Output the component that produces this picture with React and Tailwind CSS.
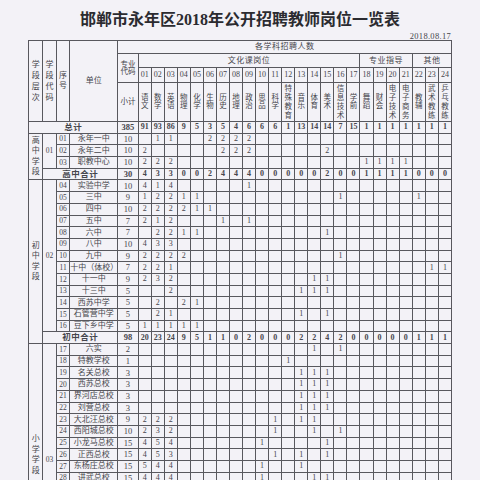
import React from 'react';

// 科目列（01–24）
const SUBJECTS = [
  '语文', '数学', '英语', '物理', '化学', '生物', '历史', '地理', '政治', '思品', '科学', '特殊教育',
  '音乐', '体育', '美术', '信息技术', '学前', '舞蹈', '财会', '电子技术', '电子商务', '教辅', '武术教练', '乒乓教练',
];

const TOTAL = [385, 91, 93, 86, 9, 5, 3, 5, 4, 6, 6, 6, 1, 13, 14, 14, 7, 15, 1, 1, 1, 1, 1, 1, 1];

const HIGH = [
  { seq: '01', name: '永年一中', total: 10, v: { 2: 1, 3: 1, 6: 2, 7: 2, 8: 2, 9: 2 } },
  { seq: '02', name: '永年二中', total: 10, v: { 1: 2, 7: 2, 8: 2, 9: 2, 15: 2 } },
  { seq: '03', name: '职教中心', total: 10, v: { 1: 2, 2: 2, 3: 2, 18: 1, 19: 1, 20: 1, 21: 1 } },
];
const HIGH_SUM = [30, 4, 3, 3, 0, 0, 2, 4, 4, 4, 0, 0, 0, 0, 0, 2, 0, 0, 1, 1, 1, 1, 0, 0, 0];

const MID = [
  { seq: '04', name: '实验中学', total: 10, v: { 1: 4, 2: 1, 3: 4, 9: 1 } },
  { seq: '05', name: '三中', total: 9, v: { 1: 1, 2: 2, 3: 2, 4: 1, 5: 1, 16: 1, 22: 1 } },
  { seq: '06', name: '四中', total: 10, v: { 1: 2, 2: 2, 3: 2, 4: 2, 5: 1, 6: 1 } },
  { seq: '07', name: '五中', total: 7, v: { 1: 2, 2: 1, 3: 2, 7: 1, 9: 1 } },
  { seq: '08', name: '六中', total: 7, v: { 2: 2, 3: 2, 4: 1, 5: 1, 15: 1 } },
  { seq: '09', name: '八中', total: 10, v: { 1: 4, 2: 3, 3: 3 } },
  { seq: '10', name: '九中', total: 9, v: { 1: 2, 2: 2, 3: 2, 4: 2, 16: 1 } },
  { seq: '11', name: '十中（体校）', total: 7, v: { 1: 2, 2: 2, 3: 1, 23: 1, 24: 1 } },
  { seq: '12', name: '十一中', total: 9, v: { 1: 2, 2: 3, 3: 2, 14: 1, 15: 1 } },
  { seq: '13', name: '十三中', total: 5, v: { 3: 2, 13: 1, 14: 1, 15: 1 } },
  { seq: '14', name: '西苏中学', total: 5, v: { 2: 2, 4: 2, 5: 1 } },
  { seq: '15', name: '石管营中学', total: 5, v: { 2: 2, 3: 1, 13: 1, 15: 1 } },
  { seq: '16', name: '豆下乡中学', total: 5, v: { 1: 1, 2: 1, 3: 1, 4: 1, 5: 1 } },
];
const MID_SUM = [98, 20, 23, 24, 9, 5, 1, 1, 0, 2, 0, 0, 0, 2, 2, 4, 2, 0, 0, 0, 0, 0, 1, 1, 1];

const PRIMARY = [
  { seq: '17', name: '六实', total: 2, v: { 14: 1, 16: 1 } },
  { seq: '18', name: '特教学校', total: 1, v: { 12: 1 } },
  { seq: '19', name: '名关总校', total: 3, v: { 13: 1, 14: 1, 15: 1 } },
  { seq: '20', name: '西苏总校', total: 3, v: { 13: 1, 14: 1, 15: 1 } },
  { seq: '21', name: '界河店总校', total: 3, v: { 13: 1, 14: 1, 15: 1 } },
  { seq: '22', name: '刘营总校', total: 3, v: { 13: 1, 14: 1, 15: 1 } },
  { seq: '23', name: '大北汪总校', total: 9, v: { 1: 2, 2: 2, 3: 2, 11: 1, 13: 1, 14: 1 } },
  { seq: '24', name: '西阳城总校', total: 10, v: { 1: 2, 2: 3, 3: 2, 11: 1, 14: 1, 16: 1 } },
  { seq: '25', name: '小龙马总校', total: 15, v: { 1: 4, 2: 5, 3: 4, 10: 1, 15: 1 } },
  { seq: '26', name: '正西总校', total: 15, v: { 1: 4, 2: 5, 3: 3, 11: 1, 13: 1, 15: 1 } },
  { seq: '27', name: '东杨庄总校', total: 15, v: { 1: 5, 2: 4, 3: 4, 10: 1, 13: 1 } },
  { seq: '28', name: '讲武总校', total: 15, v: { 1: 4, 2: 4, 3: 4, 10: 1, 14: 1, 15: 1 } },
];

const cell = 'border border-[#58585e] p-0 text-center align-middle leading-none';
const COL_IDS = Array.from({ length: 24 }, (_, i) => i + 1);

/** 竖排文字：一字一行 */
function Vert({ text, pitch = 'leading-[9px]' }) {
  return (
    <div className={`flex flex-col items-center ${pitch}`}>
      {[...text].map((c, i) => (
        <span key={i}>{c}</span>
      ))}
    </div>
  );
}

function Values({ v }) {
  return COL_IDS.map((k) => (
    <td key={k} className={`${cell} text-[8px]`}>
      {v[k] ?? ''}
    </td>
  ));
}

function SumRow({ label, span, data }) {
  return (
    <tr className="h-[11.7px] font-bold">
      <td colSpan={span} className={`${cell} text-[8.5px] tracking-[0.5px]`}>{label}</td>
      {data.map((n, i) => (
        <td key={i} className={`${cell} ${i === 0 ? 'text-[8.5px]' : 'text-[8px]'}`}>{n}</td>
      ))}
    </tr>
  );
}

function SchoolRow({ r, lead }) {
  return (
    <tr className="h-[11.7px]">
      {lead}
      <td className={`${cell} text-[7.5px]`}>{r.seq}</td>
      <td className={`${cell} text-[8px] whitespace-nowrap`}>{r.name}</td>
      <td className={`${cell} text-[8.5px]`}>{r.total}</td>
      <Values v={r.v} />
    </tr>
  );
}

export default function App() {
  return (
    <div
      className="w-[480px] h-[480px] overflow-hidden bg-[#f3f2f7] text-[#46464c]"
      style={{ fontFamily: '"Liberation Serif", "Noto Sans CJK SC", serif' }}
    >
      <div className="h-[29px] pt-[10px] text-center text-[16px] leading-[19px] font-semibold text-[#2b2b30]">
        邯郸市永年区2018年公开招聘教师岗位一览表
      </div>
      <div className="h-[11px] flex items-end justify-end pr-[29px] text-[8.5px] leading-none tracking-[0.3px]">
        2018.08.17
      </div>

      <table className="ml-[28px] w-[423px] table-fixed border-collapse">
        <colgroup>
          <col className="w-[14.3px]" />
          <col className="w-[13.6px]" />
          <col className="w-[13.4px]" />
          <col className="w-[48px]" />
          <col className="w-[20.4px]" />
          {COL_IDS.map((k) => (
            <col key={k} className="w-[13.05px]" />
          ))}
        </colgroup>
        <thead>
          <tr className="h-[13px]">
            <th rowSpan={4} className={`${cell} font-normal text-[8px]`}>
              <Vert text="学段层次" pitch="leading-[11px]" />
            </th>
            <th rowSpan={4} className={`${cell} font-normal text-[8px]`}>
              <Vert text="学段代码" pitch="leading-[11px]" />
            </th>
            <th rowSpan={4} className={`${cell} font-normal text-[8px]`}>
              <Vert text="序号" pitch="leading-[10px]" />
            </th>
            <th rowSpan={4} className={`${cell} font-normal text-[8px]`}>单位</th>
            <th colSpan={25} className={`${cell} font-normal text-[8px] tracking-[0.5px]`}>各学科招聘人数</th>
          </tr>
          <tr className="h-[14px]">
            <th rowSpan={2} className={`${cell} font-normal text-[7.5px] leading-[9px]`}>
              专业<br />代码
            </th>
            <th colSpan={17} className={`${cell} font-normal text-[8px] tracking-[0.5px]`}>文化课岗位</th>
            <th colSpan={4} className={`${cell} font-normal text-[8px] tracking-[0.5px]`}>专业指导</th>
            <th colSpan={3} className={`${cell} font-normal text-[8px] tracking-[0.5px]`}>其他</th>
          </tr>
          <tr className="h-[15px]">
            {COL_IDS.map((k) => (
              <th key={k} className={`${cell} font-normal text-[8px]`}>
                {String(k).padStart(2, '0')}
              </th>
            ))}
          </tr>
          <tr className="h-[39px]">
            <th className={`${cell} font-normal text-[7.5px]`}>小计</th>
            {SUBJECTS.map((s) => (
              <th key={s} className={`${cell} font-normal text-[7.5px]`}>
                <Vert text={s} pitch={s.length > 2 ? 'leading-[9px]' : 'leading-[8.5px]'} />
              </th>
            ))}
          </tr>
        </thead>
        <tbody>
          <SumRow label="总计" span={4} data={TOTAL} />

          {HIGH.map((r, i) => (
            <SchoolRow
              key={r.seq}
              r={r}
              lead={
                i === 0 && (
                  <>
                    <td rowSpan={4} className={`${cell} text-[8px]`}>
                      <Vert text="高中学段" pitch="leading-[10.5px]" />
                    </td>
                    <td rowSpan={3} className={`${cell} text-[7.5px]`}>01</td>
                  </>
                )
              }
            />
          ))}
          <SumRow label="高中合计" span={3} data={HIGH_SUM} />

          {MID.map((r, i) => (
            <SchoolRow
              key={r.seq}
              r={r}
              lead={
                i === 0 && (
                  <>
                    <td rowSpan={14} className={`${cell} text-[8px]`}>
                      <Vert text="初中学段" pitch="leading-[10.5px]" />
                    </td>
                    <td rowSpan={13} className={`${cell} text-[7.5px]`}>02</td>
                  </>
                )
              }
            />
          ))}
          <SumRow label="初中合计" span={3} data={MID_SUM} />

          {PRIMARY.map((r, i) => (
            <SchoolRow
              key={r.seq}
              r={r}
              lead={
                i === 0 && (
                  <>
                    <td rowSpan={12} className={`${cell} text-[8px] !align-bottom pb-[7px]`}>
                      <Vert text="小学学段" pitch="leading-[10.5px]" />
                    </td>
                    <td rowSpan={12} className={`${cell} text-[7.5px] !align-bottom pb-[20px]`}>03</td>
                  </>
                )
              }
            />
          ))}
        </tbody>
      </table>
    </div>
  );
}
